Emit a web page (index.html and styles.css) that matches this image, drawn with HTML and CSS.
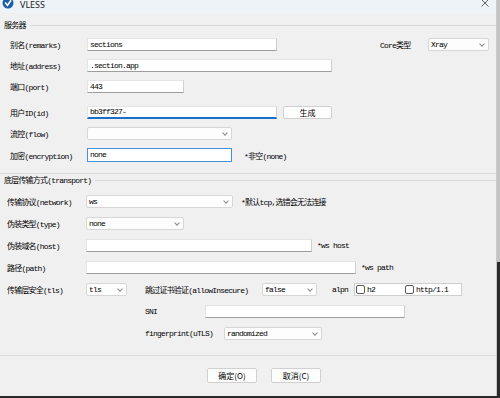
FILE: index.html
```html
<!DOCTYPE html>
<html lang="zh-CN">
<head>
    <meta charset="UTF-8">
    <meta name="viewport" content="width=device-width, initial-scale=1.0">
    <title>VLESS</title>
    <link rel="stylesheet" href="styles.css">
</head>
<body>
<div class="desktop">
    <div class="window">
        <div class="titlebar">
            <div class="title">
                <svg class="app-icon" width="12" height="12" viewBox="0 0 12 12">
                    <circle cx="6" cy="6" r="5.5" fill="#1d5ea8"/>
                    <path d="M3.2 5.6 L5.4 8.4 L9 3.2" fill="none" stroke="#fff" stroke-width="1.6"/>
                </svg>
                <span>VLESS</span>
            </div>
            <svg class="close" width="8" height="8" viewBox="0 0 8 8">
                <path d="M0.5 0.5 L7.5 7.5 M7.5 0.5 L0.5 7.5" stroke="#555" stroke-width="0.9"/>
            </svg>
        </div>

        <div class="group server">
            <div class="legend"><span>服务器</span></div>
            <div class="rows">
                <div class="row">
                    <span class="lbl">别名(remarks)</span>
                    <div class="field w190">sections</div>
                    <span class="core-lbl">Core类型</span>
                    <div class="select w61"><span>Xray</span></div>
                </div>
                <div class="row">
                    <span class="lbl">地址(address)</span>
                    <div class="field w245">.section.app</div>
                </div>
                <div class="row">
                    <span class="lbl">端口(port)</span>
                    <div class="field w97">443</div>
                </div>
                <div class="row row-id">
                    <span class="lbl">用户ID(id)</span>
                    <div class="field w190 underline">bb3ff327-</div>
                    <div class="btn btn-gen">生成</div>
                </div>
                <div class="row">
                    <span class="lbl">流控(flow)</span>
                    <div class="select w145"><span></span></div>
                </div>
                <div class="row tall">
                    <span class="lbl">加密(encryption)</span>
                    <div class="field w145 focused">none</div>
                    <span class="note n12">*非空(none)</span>
                </div>
            </div>
        </div>

        <div class="group transport">
            <div class="legend"><span>底层传输方式(transport)</span></div>
            <div class="rows">
                <div class="row">
                    <span class="lbl">传输协议(network)</span>
                    <div class="select w147"><span>ws</span></div>
                    <span class="note n8">*默认tcp,选错会无法连接</span>
                </div>
                <div class="row">
                    <span class="lbl">伪装类型(type)</span>
                    <div class="select w98"><span>none</span></div>
                </div>
                <div class="row">
                    <span class="lbl">伪装域名(host)</span>
                    <div class="field w226"></div>
                    <span class="note n5">*ws host</span>
                </div>
                <div class="row">
                    <span class="lbl">路径(path)</span>
                    <div class="field w270"></div>
                    <span class="note n5">*ws path</span>
                </div>
                <div class="row">
                    <span class="lbl">传输层安全(tls)</span>
                    <div class="select w41"><span>tls</span></div>
                    <span class="lbl-insecure">跳过证书验证(allowInsecure)</span>
                    <div class="select w55"><span>false</span></div>
                    <span class="lbl-alpn">alpn</span>
                    <div class="alpn-box">
                        <span class="check"><i class="box"></i>h2</span>
                        <span class="check"><i class="box"></i>http/1.1</span>
                    </div>
                </div>
                <div class="row sub">
                    <span class="lbl-sni">SNI</span>
                    <div class="field w200"></div>
                </div>
                <div class="row sub">
                    <span class="lbl-fp">fingerprint(uTLS)</span>
                    <div class="select w98"><span>randomized</span></div>
                </div>
            </div>
        </div>

        <div class="footer">
            <div class="btn btn-foot">确定(O)</div>
            <div class="btn btn-foot">取消(C)</div>
        </div>
    </div>
</div>
</body>
</html>
```

FILE: styles.css
```css
* {
    box-sizing: border-box;
    margin: 0;
    padding: 0;
}
html, body {
    width: 500px;
    height: 398px;
    overflow: hidden;
}
body {
    background: #9c9c9c;
    font-family: "Liberation Mono", "Noto Sans CJK SC", monospace;
    font-size: 8px;
    letter-spacing: -0.8px;
    color: #000;
}
.desktop {
    width: 500px;
    height: 398px;
    background: linear-gradient(to bottom, #c4c4c4 0, #c4c4c4 262px, #2b2b2b 262px);
}
.window {
    width: 497px;
    height: 396px;
    background: #f0f0f0;
    border-right: 1px solid #c9c9c9;
}

/* title bar, cut off at the top */
.titlebar {
    height: 13px;
    background: #eef3f8;
    display: flex;
    justify-content: space-between;
    align-items: flex-start;
    overflow: hidden;
}
.title {
    display: flex;
    align-items: center;
    margin-left: 2px;
    font-family: "Noto Sans", "Liberation Sans", sans-serif;
    font-size: 9px;
    line-height: 10px;
    letter-spacing: 0;
    color: #222;
}
.app-icon {
    margin-right: 6px;
    margin-top: -5px;
}
.close {
    margin-top: -1px;
    margin-right: 7px;
}

/* group boxes */
.legend {
    display: flex;
    align-items: center;
    height: 11px;
    padding-left: 4px;
}
.legend::after {
    content: "";
    flex: 1;
    border-top: 1px solid #d9d9d9;
    margin-left: 4px;
    margin-top: 1px;
}
.server .legend {
    margin-top: 6px;
}
.server {
    border-bottom: 1px solid #dcdcdc;
    padding-bottom: 11px;
}
.rows {
    display: flex;
    flex-direction: column;
}
.server .rows {
    margin-top: 8px;
    padding-left: 10px;
    gap: 8px;
}
.transport .rows {
    margin-top: 10px;
    padding-left: 7px;
    gap: 9px;
}
.row {
    display: flex;
    align-items: center;
    height: 13px;
    white-space: nowrap;
}
.row.tall {
    height: 14px;
}
.row-id {
    margin-top: 5px;
}
.server .lbl {
    width: 77px;
}
.transport .lbl {
    width: 79px;
}

/* text fields */
.field {
    height: 100%;
    background: #fff;
    border: 1px solid #e4e4e4;
    border-right-color: #cfcfcf;
    border-bottom-color: #9d9d9d;
    padding: 0 2px;
    line-height: 11px;
}
.field.underline {
    border-bottom: 2px solid #1a6fc9;
    line-height: 10px;
}
.field.focused {
    border: 1px solid #4a90d9;
    line-height: 12px;
}

/* combo boxes */
.select {
    height: 100%;
    display: flex;
    align-items: center;
    justify-content: space-between;
    background: #fdfdfd;
    border: 1px solid #d6d6d6;
    border-radius: 2px;
    padding: 0 4px 0 2px;
}
.select::after {
    content: "";
    width: 3px;
    height: 3px;
    border-right: 1px solid #8a8a8a;
    border-bottom: 1px solid #8a8a8a;
    transform: rotate(45deg);
    margin-top: -2px;
}

.w41 { width: 41px; }
.w55 { width: 55px; }
.w61 { width: 61px; }
.w97 { width: 97px; }
.w98 { width: 98px; }
.w145 { width: 145px; }
.w147 { width: 147px; }
.w190 { width: 190px; }
.w200 { width: 200px; }
.w226 { width: 226px; }
.w245 { width: 245px; }
.w270 { width: 270px; }

.core-lbl {
    margin-left: 103px;
    width: 48px;
}
.note.n5 { margin-left: 5px; }
.note.n8 { margin-left: 8px; }
.note.n12 { margin-left: 12px; }

.lbl-insecure {
    margin-left: 18px;
    width: 117px;
}
.lbl-alpn {
    margin-left: 15px;
    width: 22px;
}
.alpn-box {
    width: 108px;
    height: 100%;
    display: flex;
    align-items: center;
    background: #fff;
    border: 1px solid #cfcfcf;
    padding-left: 1px;
}
.check {
    display: flex;
    align-items: center;
    width: 49px;
}
.check .box {
    width: 9px;
    height: 9px;
    border: 1px solid #5a5a5a;
    border-radius: 2px;
    background: #fff;
    margin-right: 2px;
}

.row.sub {
    padding-left: 138px;
}
.lbl-sni {
    width: 60px;
}
.lbl-fp {
    width: 79px;
}

/* buttons */
.btn {
    display: flex;
    align-items: center;
    justify-content: center;
    background: #fdfdfd;
    border: 1px solid #d0d0d0;
    border-radius: 2px;
    font-family: "Noto Sans CJK SC", "Liberation Mono", sans-serif;
    letter-spacing: 0;
}
.btn-gen {
    margin-left: 6px;
    width: 49px;
    height: 13px;
}
.footer {
    margin-top: 15px;
    border-top: 1px solid #dcdcdc;
    padding: 12px 0 0 207px;
    display: flex;
    gap: 14px;
}
.btn-foot {
    width: 50px;
    height: 15px;
}
```
